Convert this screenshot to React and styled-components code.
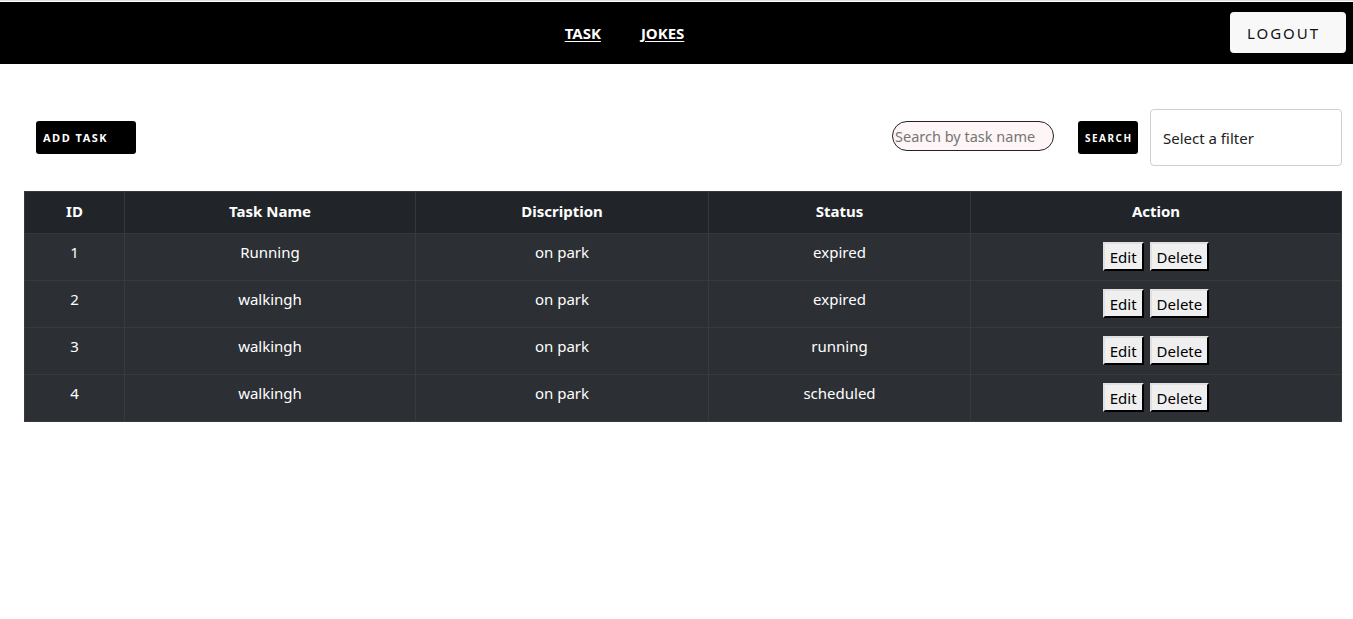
import React from 'react';
import styled, { createGlobalStyle } from 'styled-components';

const GlobalStyle = createGlobalStyle`
  html, body { background: #ffffff; }
  body {
    margin: 0;
    padding-top: 1px;
    border-top: 1px solid #dcdcdc;
    font-family: "Noto Sans", "Open Sans", sans-serif;
  }
`;

const tasks = [
    { id: 1, name: 'Running', description: 'on park', status: 'expired' },
    { id: 2, name: 'walkingh', description: 'on park', status: 'expired' },
    { id: 3, name: 'walkingh', description: 'on park', status: 'running' },
    { id: 4, name: 'walkingh', description: 'on park', status: 'scheduled' },
];

const App = () => {
    return (
        <>
            <GlobalStyle />
            <Navbar>
                <NavLinks>
                    <NavLink href="#">TASK</NavLink>
                    <NavLink href="#">JOKES</NavLink>
                </NavLinks>
                <LogoutButton>LOGOUT</LogoutButton>
            </Navbar>

            <Page>
                <Toolbar>
                    <DarkButton $width="100px" $size="11px" $align="left">ADD TASK</DarkButton>
                    <SearchGroup>
                        <SearchInput placeholder="Search by task name" />
                        <DarkButton $width="60px" $size="10px" $align="center">SEARCH</DarkButton>
                        <FilterSelect>Select a filter</FilterSelect>
                    </SearchGroup>
                </Toolbar>

                <Table>
                    <colgroup>
                        <col style={{ width: 100 }} />
                        <col style={{ width: 291 }} />
                        <col style={{ width: 293 }} />
                        <col style={{ width: 262 }} />
                        <col />
                    </colgroup>
                    <thead>
                        <tr>
                            <Th>ID</Th>
                            <Th>Task Name</Th>
                            <Th>Discription</Th>
                            <Th>Status</Th>
                            <Th>Action</Th>
                        </tr>
                    </thead>
                    <tbody>
                        {tasks.map(task => (
                            <tr key={task.id}>
                                <Td>{task.id}</Td>
                                <Td>{task.name}</Td>
                                <Td>{task.description}</Td>
                                <Td>{task.status}</Td>
                                <Td>
                                    <ActionButton>Edit</ActionButton>
                                    <ActionButton>Delete</ActionButton>
                                </Td>
                            </tr>
                        ))}
                    </tbody>
                </Table>
            </Page>
        </>
    );
}

export default App;

const Navbar = styled.nav`
    height: 62px;
    background: #000000;
    display: flex;
    align-items: center;
    justify-content: center;
    position: relative;
`
const NavLinks = styled.div`
    display: flex;
    gap: 40px;
    margin-left: -104px;
`
const NavLink = styled.a`
    color: #ffffff;
    font-size: 15px;
    font-weight: 700;
    text-decoration: underline;
    text-underline-offset: 2px;
`
const LogoutButton = styled.button`
    position: absolute;
    right: 7px;
    top: 10px;
    width: 116px;
    height: 41px;
    background: #f8f8f8;
    border: none;
    border-radius: 4px;
    font-family: "Noto Sans", sans-serif;
    font-size: 15px;
    letter-spacing: 2px;
    color: #111111;
    padding: 0 9px 0 0;
`
const Page = styled.main`
    padding: 45px 11px 0 24px;
`
const Toolbar = styled.div`
    display: flex;
    align-items: center;
    justify-content: space-between;
    padding-left: 12px;
    margin-bottom: 25px;
`
const SearchGroup = styled.div`
    display: flex;
    align-items: center;
`
const DarkButton = styled.button`
    width: ${p => p.$width};
    height: 33px;
    background: #000000;
    color: #ffffff;
    border: none;
    border-radius: 3px;
    font-family: "Noto Sans", sans-serif;
    font-size: ${p => p.$size};
    font-weight: 700;
    letter-spacing: 1.5px;
    text-align: ${p => p.$align};
    padding: 0 7px;
`
const SearchInput = styled.input`
    width: 162px;
    height: 30px;
    box-sizing: border-box;
    border: 1px solid #222222;
    border-radius: 15px;
    background: #fdf5f6;
    font-family: "Noto Sans", sans-serif;
    font-size: 14.5px;
    padding: 0 2px;
    margin: 0 24px 3px 0;
    &::placeholder { color: #757575; }
`
const FilterSelect = styled.div`
    width: 192px;
    height: 57px;
    box-sizing: border-box;
    margin-left: 12px;
    border: 1px solid #cfcfcf;
    border-radius: 4px;
    display: flex;
    align-items: center;
    padding-left: 12px;
    font-size: 15px;
    color: #222222;
`
const Table = styled.table`
    width: 100%;
    border-collapse: collapse;
    table-layout: fixed;
    color: #ffffff;
    font-size: 15px;
`
const Th = styled.th`
    height: 42px;
    box-sizing: border-box;
    background: #212529;
    border: 1px solid #32383e;
    font-weight: 700;
    text-align: center;
    vertical-align: top;
    padding: 9px 8px 0;
`
const Td = styled.td`
    height: 47px;
    box-sizing: border-box;
    background: #2c3034;
    border: 1px solid #373b3e;
    text-align: center;
    vertical-align: top;
    padding: 8px 8px 0;
`
const ActionButton = styled.button`
    background: #efefef;
    border: 2px outset #767676;
    border-color: #e0e0e0 #555555 #555555 #e0e0e0;
    font-family: "Noto Sans", sans-serif;
    font-size: 15px;
    color: #000000;
    padding: 1px 5px;
    margin: 0 3px;
    height: 29px;
`
